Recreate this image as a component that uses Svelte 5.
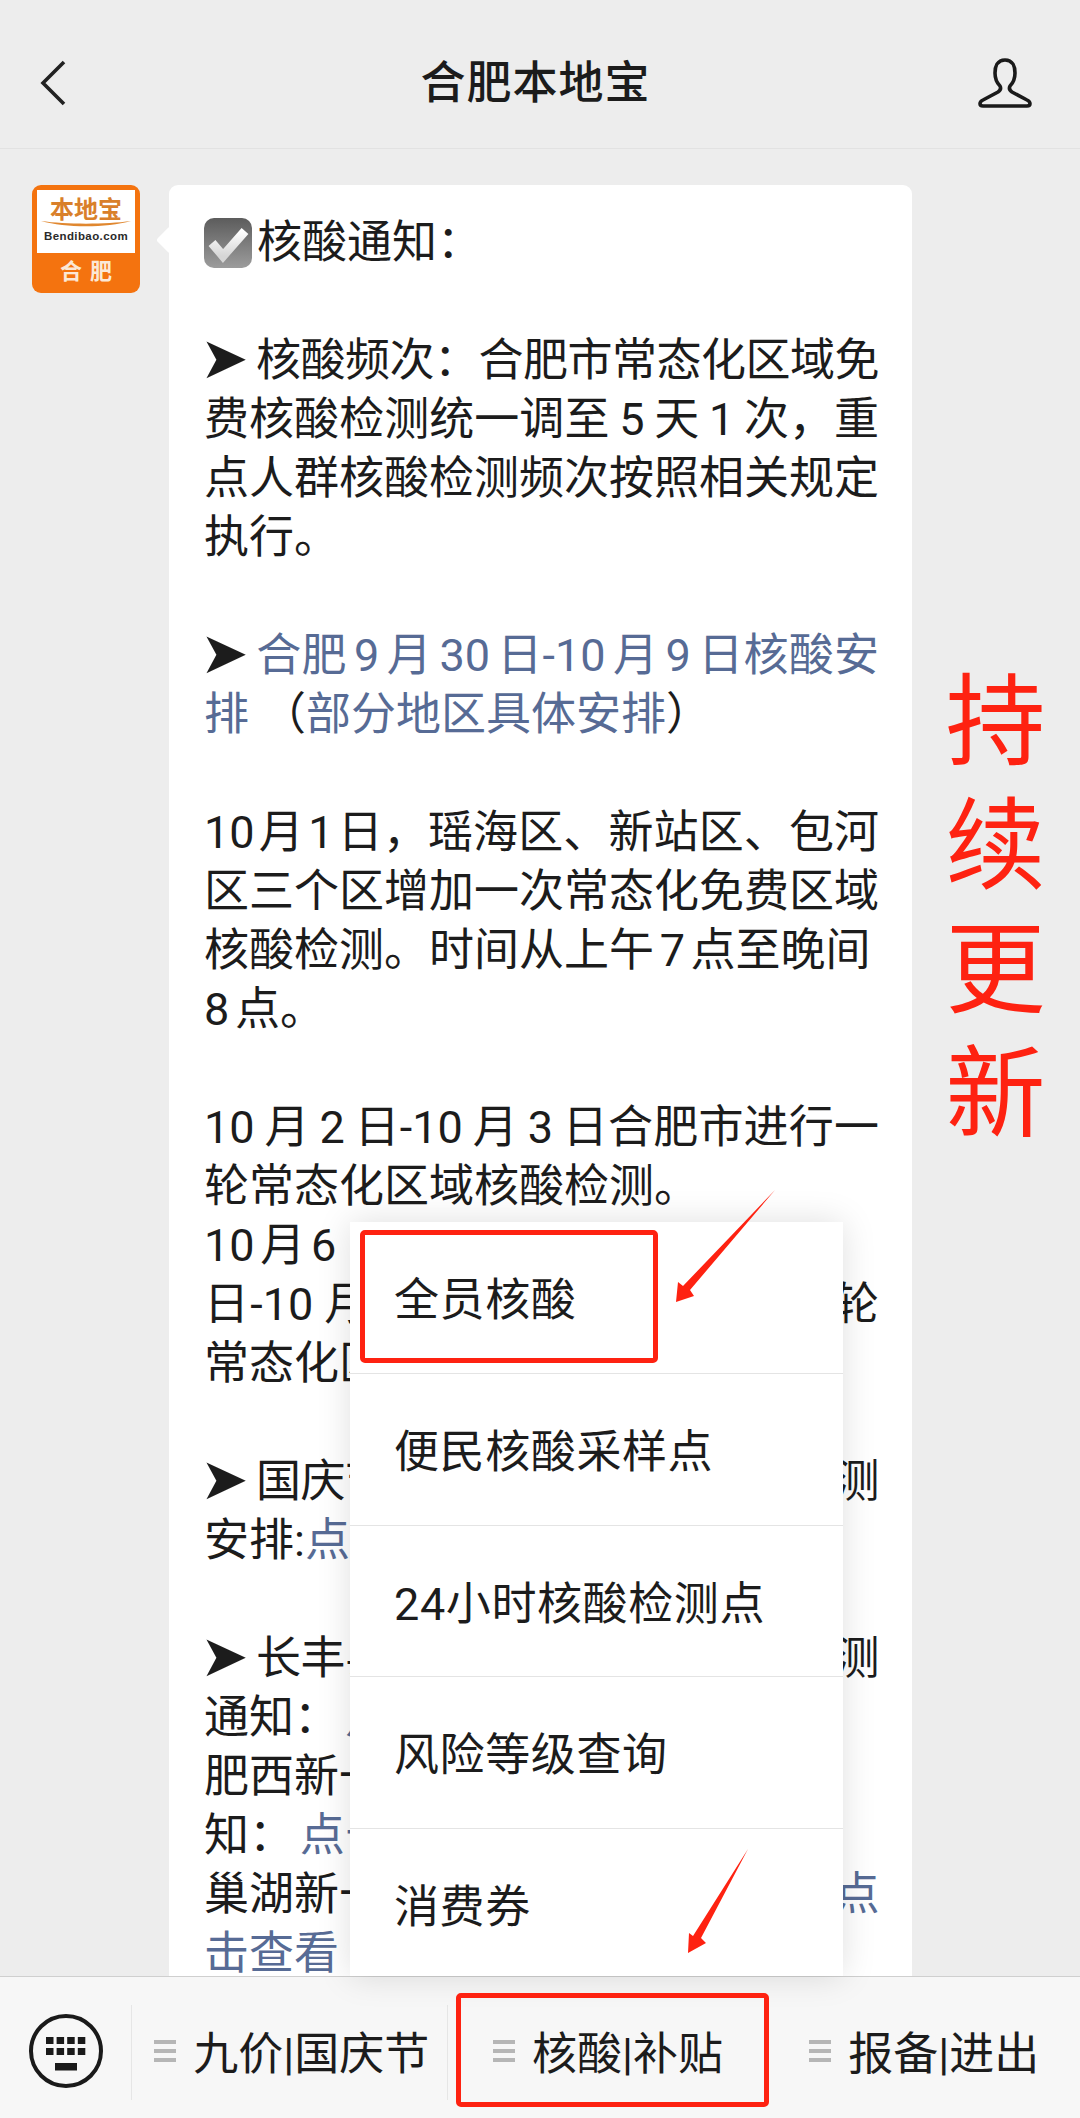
<script>
  const menuItems = ['全员核酸', '便民核酸采样点', '24小时核酸检测点', '风险等级查询', '消费券'];
  const tabs = ['九价|国庆节', '核酸|补贴', '报备|进出'];
</script>

<div class="page">
  <header class="topbar">
    <svg class="back" viewBox="0 0 26 46" width="26" height="46">
      <path d="M24 2 L3 23 L24 44" fill="none" stroke="#222" stroke-width="3.6" />
    </svg>
    <h1>合肥本地宝</h1>
    <svg class="person" viewBox="975 55 60 56" width="60" height="56">
      <path
        d="M1005 60C997 60 995 67 995 73C995 79 997 83 1000 86C1001 88 1001 90 998 92L983 100C979 102 979 106 983 106H1027C1031 106 1031 102 1027 100L1012 92C1009 90 1009 88 1010 86C1013 83 1015 79 1015 73C1015 67 1013 60 1005 60Z"
        fill="none"
        stroke="#1a1a1a"
        stroke-width="3.6"
      />
    </svg>
  </header>

  <main class="chat">
    <div class="avatar">
      <div class="avatar-top">
        <span class="brand">本地宝</span>
        <svg class="swoosh" viewBox="0 0 90 8" width="90" height="8">
          <path d="M0 1C25 8 65 8 90 1C65 4.5 25 4.5 0 1Z" fill="#e0872f" />
        </svg>
        <span class="domain">Bendibao.com</span>
      </div>
      <div class="avatar-city">合肥</div>
    </div>

    <div class="bubble">
      <p>
        <svg class="check" viewBox="0 0 48 50" width="48" height="50">
          <defs>
            <linearGradient id="box" x1="0" y1="0" x2="0" y2="1">
              <stop offset="0" stop-color="#5c5c5c" />
              <stop offset="1" stop-color="#9c9c9c" />
            </linearGradient>
            <linearGradient id="tick" x1="0" y1="0" x2="0" y2="1">
              <stop offset="0" stop-color="#fff" />
              <stop offset="1" stop-color="#d6d6d6" />
            </linearGradient>
          </defs>
          <rect width="48" height="50" rx="10" fill="url(#box)" />
          <path d="M8 25L19 38L41 13" fill="none" stroke="url(#tick)" stroke-width="9" />
        </svg>核酸通知&#xFF1A;
      </p>
      <p>
        <span class="j tight"><span class="arr">➤</span>核酸频次&#xFF1A;合肥市常态化区域免</span>
        <span class="j wide">费核酸检测统一调至 5 天 1 次&#xFF0C;重</span>
        <span class="j">点人群核酸检测频次按照相关规定</span>
        执行。
      </p>
      <p>
        <span class="j mid"><span class="arr">➤</span><a href="#a">合肥 9 月 30 日-10 月 9 日核酸安</a></span>
        <a href="#a">排</a><span class="paren">&#xFF08;</span><a href="#a">部分地区具体安排</a>&#xFF09;
      </p>
      <p>
        <span class="j fit">10 月 1 日&#xFF0C;瑶海区、新站区、包河</span>
        <span class="j">区三个区增加一次常态化免费区域</span>
        核酸检测。时间从上午 7 点至晚间<br />
        8 点。
      </p>
      <p>
        <span class="j wide">10 月 2 日-10 月 3 日合肥市进行一</span>
        轮常态化区域核酸检测。<br />
        10 月 6<br />
        <span class="j wide">日-10 月 7 日合肥市继续进行一轮</span>
        常态化区域核酸检测。
      </p>
      <p>
        <span class="j tight"><span class="arr">➤</span>国庆节假期间合肥各区核酸检测</span>
        安排:<a href="#a">点击查看</a>
      </p>
      <p>
        <span class="j tight"><span class="arr">➤</span>长丰县国庆假期常态化核酸检测</span>
        通知&#xFF1A; <a href="#a">点击查看</a><br />
        肥西新一轮常态化核酸检测通<br />
        知&#xFF1A; <a href="#a">点击查看</a><br />
        <span class="j tight">巢湖新一轮区域核酸检测通知&#xFF1A;<a href="#a">点</a></span>
        <a href="#a">击查看</a>
      </p>
    </div>

    <div class="update-note">
      <span>持</span>
      <span>续</span>
      <span>更</span>
      <span>新</span>
    </div>
  </main>

  <nav class="tabbar">
    <div class="keyboard">
      <svg viewBox="0 0 76 76" width="76" height="76">
        <circle cx="38" cy="38" r="35" fill="none" stroke="#1a1a1a" stroke-width="4" />
        {#each [0, 1] as row}
          {#each [0, 1, 2, 3] as col}
            <rect x={18 + col * 10.6} y={24 + row * 11} width="7.5" height="7" fill="#1a1a1a" />
          {/each}
        {/each}
        <rect x="27" y="50" width="22" height="7.5" fill="#1a1a1a" />
      </svg>
    </div>
    {#each tabs as tab}
      <div class="tab">
        <span class="burger"></span>
        <span>{tab}</span>
      </div>
    {/each}
  </nav>

  <ul class="menu">
    {#each menuItems as item}
      <li>{item}</li>
    {/each}
  </ul>

  <div class="mark mark-menu"></div>
  <div class="mark mark-tab"></div>
  <svg class="arrows" viewBox="0 0 1080 2118" width="1080" height="2118">
    <polygon points="775,1190 690,1290 694,1296 676,1302 678,1282 683,1286" fill="#fe2211" />
    <polygon points="748,1849 701,1938 706,1943 688,1953 689,1933 693,1936" fill="#fe2211" />
  </svg>
</div>

<style>
  :global(body) {
    margin: 0;
  }

  .page {
    position: relative;
    display: flex;
    flex-direction: column;
    width: 1080px;
    height: 2118px;
    overflow: hidden;
    background: #ededed;
    color: #1c1c1c;
    font-family: Roboto, "Noto Sans CJK SC", sans-serif;
  }

  .topbar {
    display: grid;
    grid-template-columns: 1fr auto 1fr;
    align-items: center;
    flex: none;
    height: 149px;
    padding: 18px 49px 0 40px;
    border-bottom: 1px solid #e2e2e2;
    box-sizing: border-box;
  }

  .topbar h1 {
    margin: 0;
    font-size: 45px;
    font-weight: 500;
    line-height: 1;
    letter-spacing: 1px;
  }

  .person {
    justify-self: end;
    margin-right: -4px;
  }

  .chat {
    display: flex;
    flex: 1;
    min-height: 0;
    padding: 36px 0 0 32px;
    overflow: hidden;
  }

  .avatar {
    display: flex;
    flex-direction: column;
    flex: none;
    width: 108px;
    height: 108px;
    border-radius: 9px;
    overflow: hidden;
    background: #f4730f;
  }

  .avatar-top {
    display: flex;
    flex-direction: column;
    align-items: center;
    height: 63px;
    margin: 5px 5px 0;
    background: #fff;
    color: #d9802a;
  }

  .brand {
    margin-top: 7px;
    font-size: 24px;
    font-weight: 700;
    line-height: 26px;
  }

  .swoosh {
    margin-top: -3px;
  }

  .domain {
    margin-top: 1px;
    color: #2a2a2a;
    font-family: "Liberation Sans", sans-serif;
    font-size: 11.5px;
    font-weight: 700;
    line-height: 14px;
    letter-spacing: 0.4px;
  }

  .avatar-city {
    flex: 1;
    color: #fbe8d6;
    font-size: 22px;
    font-weight: 700;
    line-height: 38px;
    letter-spacing: 8px;
    text-align: center;
    text-indent: 8px;
  }

  .bubble {
    position: relative;
    flex: none;
    box-sizing: border-box;
    width: 743px;
    margin-left: 29px;
    padding: 28px 33px 0 35px;
    border-radius: 9px 9px 0 0;
    background: #fff;
    font-size: 45px;
    line-height: 59px;
    word-spacing: -5.5px;
  }

  .bubble::before {
    content: "";
    position: absolute;
    top: 45px;
    left: -9px;
    width: 20px;
    height: 20px;
    background: #fff;
    transform: rotate(45deg);
    border-radius: 3px;
  }

  .bubble p {
    margin: 0 0 59px;
  }

  .bubble a {
    color: #576b95;
    text-decoration: none;
  }

  .j {
    display: block;
    text-align: justify;
    text-align-last: justify;
  }

  .j.wide {
    word-spacing: -1.5px;
  }

  .j.mid {
    word-spacing: -4px;
  }

  .j.fit {
    word-spacing: -7px;
  }

  .tight {
    letter-spacing: -0.6px;
  }

  .check {
    margin-right: 5px;
    vertical-align: -10px;
  }

  .arr {
    display: inline-block;
    width: 52px;
    margin-left: -4px;
    margin-right: 4px;
    font-family: "DejaVu Sans", sans-serif;
    font-size: 58px;
    line-height: 0;
    letter-spacing: 0;
    text-align-last: left;
    vertical-align: -2px;
  }

  .paren {
    margin-left: 12px;
  }

  .update-note {
    display: flex;
    flex-direction: column;
    align-items: center;
    flex: 1;
    margin-top: 476px;
    padding-right: 1px;
    color: #fe2211;
    font-size: 100px;
    line-height: 124px;
  }

  .tabbar {
    display: flex;
    flex: none;
    height: 142px;
    box-sizing: border-box;
    padding-top: 6px;
    border-top: 1px solid #cfcfcf;
    background: #f7f7f7;
    font-size: 45px;
  }

  .keyboard {
    display: flex;
    align-items: center;
    box-sizing: border-box;
    flex: none;
    width: 131px;
    padding-left: 28px;
  }

  .tab {
    position: relative;
    display: flex;
    align-items: center;
    justify-content: center;
    flex: 1;
    gap: 17px;
    padding-left: 5px;
  }

  .tab::before {
    content: "";
    position: absolute;
    top: 22px;
    bottom: 18px;
    left: 0;
    width: 1px;
    background: #e6e6e6;
  }

  .tab:last-child::before {
    display: none;
  }

  .burger {
    flex: none;
    width: 22px;
    height: 22px;
    background: repeating-linear-gradient(#b6b6b6 0 4px, transparent 4px 9px);
  }

  .menu {
    position: absolute;
    top: 1222px;
    left: 350px;
    width: 493px;
    height: 754px;
    margin: 0;
    padding: 0;
    overflow: hidden;
    list-style: none;
    background: #fff;
    box-shadow: 0 0 32px rgba(0, 0, 0, 0.13);
    font-size: 45px;
    letter-spacing: 0.6px;
  }

  .menu li {
    box-sizing: border-box;
    height: 151.8px;
    padding: 5px 0 0 44px;
    border-bottom: 1px solid #e4e4e4;
    line-height: 148px;
  }

  .menu li:last-child {
    border-bottom: 0;
  }

  .mark {
    position: absolute;
    box-sizing: border-box;
    border: 5px solid #fe2211;
    border-radius: 5px;
  }

  .mark-menu {
    top: 1230px;
    left: 360px;
    width: 298px;
    height: 133px;
  }

  .mark-tab {
    top: 1993px;
    left: 456px;
    width: 313px;
    height: 114px;
  }

  .arrows {
    position: absolute;
    top: 0;
    left: 0;
    pointer-events: none;
  }
</style>
